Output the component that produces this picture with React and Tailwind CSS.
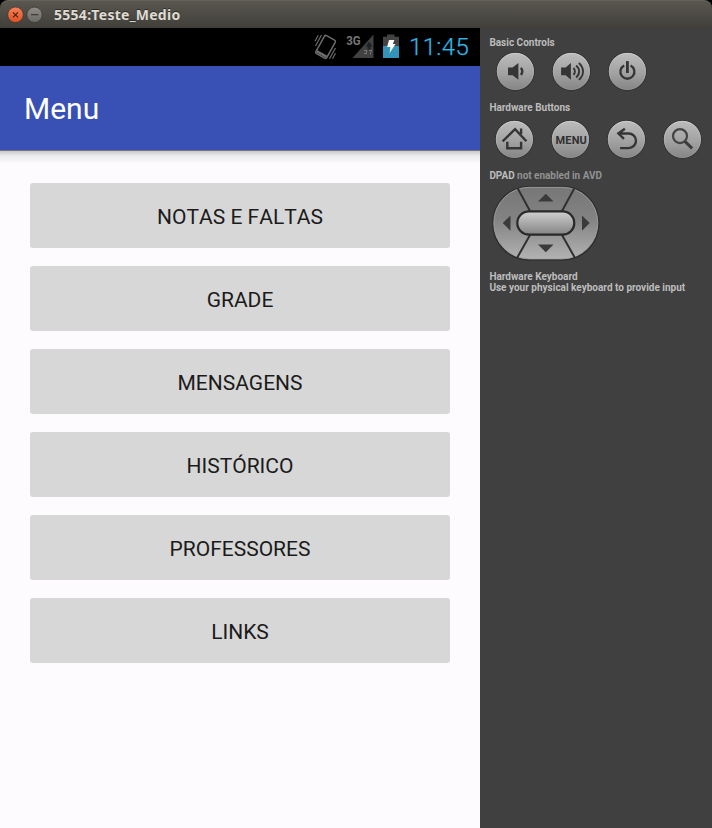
import React from "react";

const MENU_ITEMS = ["NOTAS E FALTAS", "GRADE", "MENSAGENS", "HISTÓRICO", "PROFESSORES", "LINKS"];

function TitleBar() {
  return (
    <div className="bg-black">
      <header className="flex h-7 items-center rounded-tl-lg rounded-tr-lg border-t border-[#64625b] bg-gradient-to-b from-[#59574f] to-[#403f3a] pl-[7px]">
        <svg width="36" height="18" viewBox="0 0 36 18">
          <defs>
            <linearGradient id="close" x2="0" y2="1">
              <stop stopColor="#f58259" />
              <stop offset="1" stopColor="#df4f20" />
            </linearGradient>
            <linearGradient id="minimize" x2="0" y2="1">
              <stop stopColor="#8e8c84" />
              <stop offset="1" stopColor="#6a6963" />
            </linearGradient>
          </defs>
          <circle cx="8.5" cy="8.8" r="7.8" fill="url(#close)" stroke="#35332e" strokeWidth=".7" />
          <path d="M6 6.3l5 5m0-5l-5 5" stroke="#4c2415" strokeWidth="1.2" />
          <circle cx="27.5" cy="8.8" r="7.7" fill="url(#minimize)" stroke="#35332e" strokeWidth=".7" />
          <path d="M24 8.7h7.4" stroke="#3b3935" strokeWidth="1.2" />
        </svg>
        <h1 className="ml-[11px] whitespace-nowrap pt-px font-['Noto_Sans',sans-serif] text-[14px] font-bold leading-5 tracking-[0.28px] text-[#dfdbd2] [text-shadow:0_-1px_0_#2b2a26]">
          5554:Teste_Medio
        </h1>
      </header>
    </div>
  );
}

function StatusBar() {
  return (
    <div className="flex h-[38px] items-center bg-black pl-[313px]">
      <svg width="90" height="38" viewBox="313 28 90 38" className="shrink-0">
        <g fill="none" stroke="#6b6b6b">
          <g transform="rotate(29 325.5 47)">
            <rect x="319.3" y="36.6" width="12.4" height="20.6" rx="1.6" strokeWidth="1.5" />
            <path d="M319.6 55h11.8" strokeWidth="2.6" />
          </g>
          <path d="M321.5 35l-6 11M318.3 35.2l-3.3 6M335.5 48l-6 10.8M335.5 53.3l-3 5.4" strokeWidth="1.2" />
        </g>
        <text x="346.3" y="45" fill="#747474" fontFamily="Roboto, sans-serif" fontSize="12.5" fontWeight="700" textLength="14.4" lengthAdjust="spacingAndGlyphs">3G</text>
        <path d="M373.5 34.5V58H352.5z" fill="#414141" />
        <path d="M369 41.5l3.6 5h-2v3h-3v-3h-2z" fill="#222" />
        <path d="M364 50.5h3l-1 3m1 0h-3m5-3h3l-1.5 2v2" fill="none" stroke="#777" strokeWidth="1" />
        <path d="M387 34.5h7.5v2.2h4.5V46H383v-9.3h4z" fill="#434343" />
        <path d="M383 46h16v12h-16z" fill="#3393b8" />
        <path d="M389 40h5.4l-1.6 4h2.8l-6 9 .8-6h-3.3z" fill="#fff" />
      </svg>
      <time className="ml-[6px] font-['Roboto',sans-serif] text-[24px] font-light leading-[38px] tracking-[0.35px] text-[#33b5e5] [-webkit-text-stroke:0.25px_#33b5e5]">11:45</time>
    </div>
  );
}

function Phone() {
  return (
    <main className="w-[480px] shrink-0 bg-[#fefbff]">
      <StatusBar />
      <div className="flex h-[84px] items-center bg-[#3951b5] pl-6 font-['Roboto',sans-serif] text-[30px] text-white">Menu</div>
      <div className="h-3 border-t border-[#77757b] bg-gradient-to-b from-[#cbc9cd] via-[#ededef] to-[#f7f5f8]" />
      <nav className="flex flex-col gap-[18px] px-[30px] pt-[21px]">
        {MENU_ITEMS.map((item) => (
          <button key={item} className="h-[65px] rounded-[3px] bg-[#d7d7d7] pt-[3px] font-['Roboto',sans-serif] text-[21px] leading-6 text-[#1b1b1b] [font-kerning:none]">
            {item}
          </button>
        ))}
      </nav>
    </main>
  );
}

function RoundButton({ label, children }) {
  return (
    <button aria-label={label} className="size-10">
      <svg width="40" height="40" viewBox="-20.4 -20.4 40 40">
        <circle r="19.5" fill="#303030" opacity=".75" />
        <circle r="18.5" fill="url(#face)" />
        <circle r="18.1" fill="none" stroke="url(#rim)" strokeWidth=".8" />
        {children}
      </svg>
    </button>
  );
}

function Gradients() {
  return (
    <svg width="0" height="0" className="absolute">
      <defs>
        <linearGradient id="face" x2="0" y2="1">
          <stop stopColor="#bcbcbc" />
          <stop offset=".55" stopColor="#a2a2a2" />
          <stop offset="1" stopColor="#858585" />
        </linearGradient>
        <linearGradient id="rim" x2="0" y2="1">
          <stop stopColor="#d4d4d4" />
          <stop offset="1" stopColor="#909090" />
        </linearGradient>
        <linearGradient id="pad" x2="0" y2="1">
          <stop stopColor="#777" />
          <stop offset=".45" stopColor="#838383" />
          <stop offset="1" stopColor="#b2b2b2" />
        </linearGradient>
        <linearGradient id="pill" x2="0" y2="1">
          <stop stopColor="#d0d0d0" />
          <stop offset=".5" stopColor="#aaa" />
          <stop offset="1" stopColor="#838383" />
        </linearGradient>
      </defs>
    </svg>
  );
}

function DPad() {
  return (
    <svg width="110" height="78" viewBox="491 184 110 78" className="ml-[11px] mt-[3px] block">
      <rect x="492" y="185.8" width="107.6" height="75" rx="37" fill="#2f2f2f" />
      <rect x="493.8" y="187.3" width="104" height="71.6" rx="35.5" fill="url(#pad)" stroke="#a3a3a3" strokeWidth=".9" />
      <path d="M517.5 188L530 211M574.5 188L562 211M517 258L530 235M575 258L562 235" stroke="#303030" strokeWidth="2" />
      <rect x="517.3" y="211.3" width="57" height="23.4" rx="11.7" fill="url(#pill)" stroke="#292929" strokeWidth="2.2" />
      <path d="M538 201.5h15.5l-7.7-7.8zM538 244.5h15.5l-7.7 7.8zM510.5 215.5v15.2l-7.7-7.6zM582 215.5v15.2l7.7-7.6z" fill="#3a3a3a" />
    </svg>
  );
}

function Controls() {
  return (
    <aside className="flex-1 bg-[#404040] pt-2 font-['Roboto',sans-serif] text-[10px] font-bold leading-[11px] text-[#bdbdbd]">
      <Gradients />
      <h2 className="ml-[9.4px] mt-[1px]">Basic Controls</h2>
      <div className="ml-[15px] mt-[3px] flex h-10 gap-4">
        <RoundButton label="Volume down">
          <path d="M-7.4-3.8h4.6L3-8.3V8.3L-2.8 3.8h-4.6z" fill="#353535" />
          <path d="M5.3-3.4c2.2 1.8 2.2 5 0 6.8" fill="none" stroke="#353535" strokeWidth="2.4" />
        </RoundButton>
        <RoundButton label="Volume up">
          <path d="M-10.3-3.8h4.6L-.5-8.3V8.3l-5.2-4.5h-4.6z" fill="#353535" />
          <path d="M2-3.4c2 1.8 2 5 0 6.8M4.7-6c4 3.2 4 8.8 0 12M7.4-8.4c5.6 4.6 5.6 12.2 0 16.8" fill="none" stroke="#353535" strokeWidth="1.9" />
        </RoundButton>
        <RoundButton label="Power">
          <path d="M-3.2-5.9a7 7 0 1 0 6.4 0" fill="none" stroke="#353535" strokeWidth="2.3" />
          <path d="M0-10.3V1.6" stroke="#353535" strokeWidth="2.8" />
        </RoundButton>
      </div>
      <h2 className="ml-[9.4px] mt-[11px]">Hardware Buttons</h2>
      <div className="ml-[14px] mt-[6px] flex h-10 gap-4">
        <RoundButton label="Home">
          <g fill="none" stroke="#353535" strokeWidth="2.4">
            <path d="M-11.8 1.9L.7-10.3 12 1.9M-7.1 2.4v6.4H6.7V2.4M6.7-11v5.5" />
          </g>
        </RoundButton>
        <RoundButton label="Menu">
          <text x="-14.8" y="4.6" fill="#303030" fontFamily="Roboto, sans-serif" fontSize="11" fontWeight="700" textLength="31.2" lengthAdjust="spacing">MENU</text>
        </RoundButton>
        <RoundButton label="Back">
          <path d="M-1.5-10.6L-8-5.9l5.6 5.4M-8-5.9H2.3a7.3 7.3 0 0 1 0 14.6h-8.6" fill="none" stroke="#353535" strokeWidth="2.4" />
        </RoundButton>
        <RoundButton label="Search">
          <circle cx="-2.4" cy="-3.3" r="7" fill="none" stroke="#444" strokeWidth="2.2" />
          <path d="M2.5 2l7.2 7" stroke="#3c3c3c" strokeWidth="3" />
        </RoundButton>
      </div>
      <h2 className="ml-[9.4px] mt-[11px] tracking-[-0.03px]">
        DPAD <span className="text-[#929292]">not enabled in AVD</span>
      </h2>
      <DPad />
      <div className="ml-[9.4px] mt-[9px] whitespace-nowrap">
        <h2>Hardware Keyboard</h2>
        <p>Use your physical keyboard to provide input</p>
      </div>
    </aside>
  );
}

export default function App() {
  return (
    <div className="flex h-screen w-full flex-col overflow-hidden">
      <TitleBar />
      <div className="flex min-h-0 flex-1">
        <Phone />
        <Controls />
      </div>
    </div>
  );
}
